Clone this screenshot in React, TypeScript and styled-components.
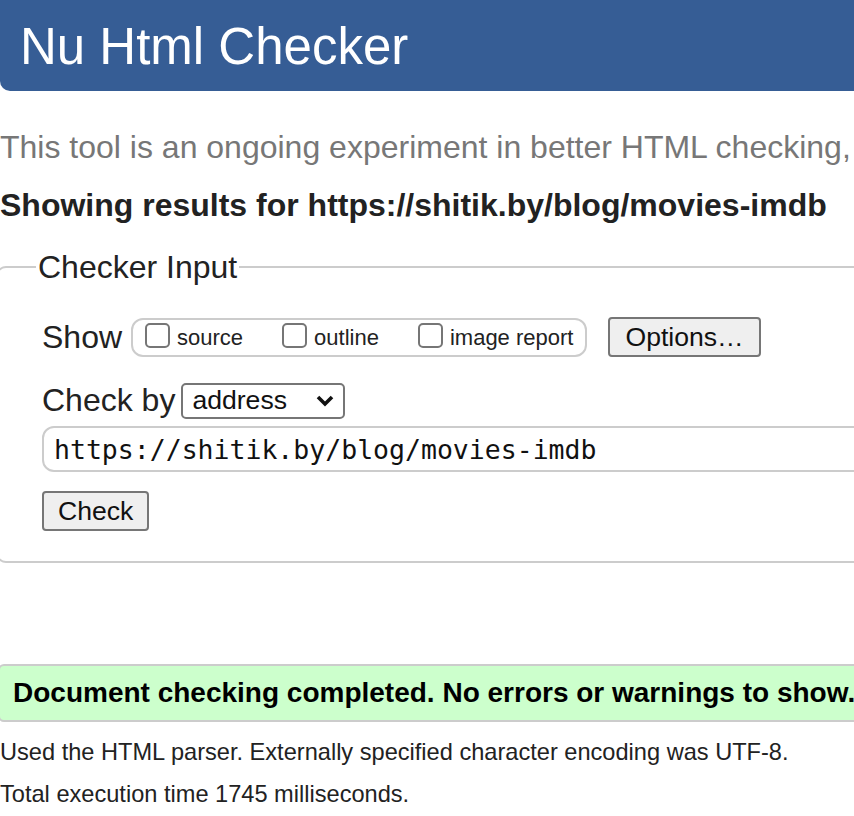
import styled, { createGlobalStyle } from 'styled-components';

const GlobalStyle = createGlobalStyle`
    html, body {
        margin: 0;
        padding: 0;
        background: #fff;
        overflow: hidden;
    }
    body {
        font-family: "Liberation Sans", Arial, Helvetica, sans-serif;
        color: #222;
    }
`;

const App = () => {
    return (
        <Page>
            <GlobalStyle />
            <Header>
                <Title>Nu Html Checker</Title>
            </Header>

            <Intro>This tool is an ongoing experiment in better HTML checking,</Intro>
            <ResultsFor>Showing results for https://shitik.by/blog/movies-imdb</ResultsFor>

            <Fieldset>
                <Legend>Checker Input</Legend>

                <Row>
                    <Label>Show</Label>
                    <ShowBox>
                        <Option>
                            <Checkbox type="checkbox" />
                            source
                        </Option>
                        <Option>
                            <Checkbox type="checkbox" />
                            outline
                        </Option>
                        <Option>
                            <Checkbox type="checkbox" />
                            image report
                        </Option>
                    </ShowBox>
                    <Button $pad={15}>Options…</Button>
                </Row>

                <Row $top={25}>
                    <Label>Check by</Label>
                    <Select>
                        <span>address</span>
                        <svg width="20" height="14" viewBox="0 0 20 14">
                            <path d="M3 3 L10 10 L17 3" fill="none" stroke="#111" strokeWidth="3.6" />
                        </svg>
                    </Select>
                </Row>

                <UrlInput readOnly value="https://shitik.by/blog/movies-imdb" />

                <Button $pad={14}>Check</Button>
            </Fieldset>

            <Success>Document checking completed. No errors or warnings to show.</Success>

            <Note $top={15}>Used the HTML parser. Externally specified character encoding was UTF-8.</Note>
            <Note $top={12}>Total execution time 1745 milliseconds.</Note>
        </Page>
    );
}

export default App;

const Page = styled.div`
    width: 900px;
    height: 816px;
`;

const Header = styled.header`
    background: #365d95;
    height: 91px;
    border-bottom-left-radius: 10px;
    display: flex;
    align-items: center;
    padding-left: 20px;
`;

const Title = styled.h1`
    margin: 0;
    color: #fff;
    font-weight: 400;
    font-size: 51px;
    line-height: 1;
    padding-top: 2px;
`;

const Intro = styled.p`
    margin: 37px 0 0;
    font-size: 32px;
    line-height: 38px;
    color: #777;
    white-space: nowrap;
`;

const ResultsFor = styled.h2`
    margin: 20px 0 0;
    font-size: 32px;
    line-height: 38px;
    font-weight: 700;
    color: #222;
    white-space: nowrap;
`;

const Fieldset = styled.fieldset`
    margin: 27px 0 0 -4px;
    padding: 34px 0 30px 44px;
    border: 2px solid #ccc;
    border-radius: 10px;
    min-height: 0;
`;

const Legend = styled.legend`
    font-size: 32px;
    padding: 0 2px;
    margin-left: -6px;
    color: #222;
    line-height: 32px;
`;

const Row = styled.div<{ $top?: number }>`
    display: flex;
    align-items: center;
    margin-top: ${p => p.$top ?? 0}px;
`;

const Label = styled.span`
    font-size: 32px;
    color: #222;
    margin-right: 6px;
`;

const ShowBox = styled.div`
    display: flex;
    align-items: center;
    gap: 39px;
    border: 2px solid #ccc;
    border-radius: 12px;
    padding: 0 12px 0 12px;
    height: 35px;
    margin: 0 21px 0 3px;
`;

const Option = styled.label`
    display: flex;
    align-items: center;
    gap: 7px;
    font-size: 22px;
    color: #222;
    padding-top: 2px;
`;

const Checkbox = styled.input`
    appearance: none;
    margin: -6px 0 0;
    width: 25px;
    height: 25px;
    border: 2px solid #767676;
    border-radius: 5px;
    background: #fff;
`;

const Button = styled.button<{ $pad: number }>`
    font-family: "Liberation Sans", Arial, sans-serif;
    font-size: 26.6px;
    color: #111;
    background: #efefef;
    border: 2px solid #767676;
    border-radius: 4px;
    height: 40px;
    padding: 0 ${p => p.$pad}px;
    display: block;
`;

const Select = styled.div`
    display: flex;
    align-items: center;
    justify-content: space-between;
    width: 164px;
    height: 36px;
    box-sizing: border-box;
    border: 2px solid #767676;
    border-radius: 5px;
    padding: 0 8px 0 9px;
    font-size: 26.6px;
    color: #111;
    background: #fff;
`;

const UrlInput = styled.input`
    display: block;
    box-sizing: border-box;
    margin: 7px 0 19px;
    width: 900px;
    height: 46px;
    border: 2px solid #ccc;
    border-radius: 12px;
    padding: 0 10px;
    font-family: "DejaVu Sans Mono", "Liberation Mono", monospace;
    font-size: 26.5px;
    color: #111;
    background: #fff;
    outline: none;
`;

const Success = styled.div`
    margin: 101px 0 0 -2px;
    height: 58px;
    box-sizing: border-box;
    background: #ccffcc;
    border: 2px solid #ccc;
    border-right: none;
    border-radius: 6px 0 0 6px;
    display: flex;
    align-items: center;
    padding-left: 13px;
    font-size: 28px;
    font-weight: 700;
    color: #000;
    white-space: nowrap;
`;

const Note = styled.p<{ $top: number }>`
    margin: ${p => p.$top}px 0 0;
    font-size: 23.6px;
    line-height: 30px;
    color: #222;
    white-space: nowrap;
`;
